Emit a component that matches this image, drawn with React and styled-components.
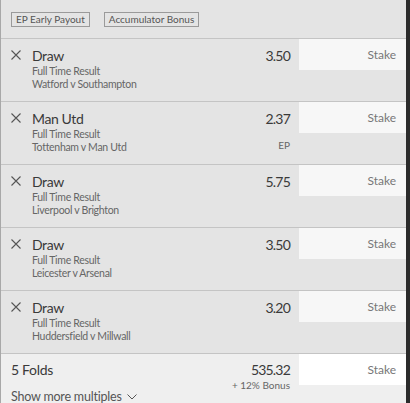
import React from 'react';
import styled, { createGlobalStyle } from 'styled-components';

const GlobalStyle = createGlobalStyle`
  html, body {
    margin: 0;
    padding: 0;
    background: #2b2b2b;
  }
  body {
    font-family: Lato, "Open Sans", sans-serif;
  }
`;

const selections = [
  { name: 'Draw', market: 'Full Time Result', fixture: 'Watford v Southampton', odds: '3.50' },
  { name: 'Man Utd', market: 'Full Time Result', fixture: 'Tottenham v Man Utd', odds: '2.37', ep: true },
  { name: 'Draw', market: 'Full Time Result', fixture: 'Liverpool v Brighton', odds: '5.75' },
  { name: 'Draw', market: 'Full Time Result', fixture: 'Leicester v Arsenal', odds: '3.50' },
  { name: 'Draw', market: 'Full Time Result', fixture: 'Huddersfield v Millwall', odds: '3.20' },
];

const Panel = styled.div`
  width: 405px;
  height: 403px;
  overflow: hidden;
  background: #e4e4e4;
  border-left: 1px solid #a8a8a8;
  color: #444;
`;

const Header = styled.div`
  height: 38px;
  display: flex;
  align-items: flex-start;
  gap: 14px;
  padding: 12px 0 0 10px;
  box-sizing: border-box;
`;

const Tag = styled.span`
  height: 15px;
  box-sizing: border-box;
  border: 1px solid #9a9a9a;
  padding: 0 4px;
  font-size: 10px;
  line-height: 13px;
  color: #555;
  white-space: nowrap;
`;

const Row = styled.div`
  display: flex;
  height: 62px;
  border-top: 1px solid #c4c4c4;
  background: ${p => (p.$footer ? '#efefef' : '#e4e4e4')};
`;

const Close = styled.div`
  width: 21px;
  padding: 11px 0 0 10px;
  svg { display: block; }
`;

const Info = styled.div`
  flex: 1;
  padding-top: 8px;
  min-width: 0;
`;

const Title = styled.div`
  font-size: 14px;
  line-height: 18px;
  letter-spacing: -0.4px;
  color: #3a3a3a;
`;

const Sub = styled.div`
  font-size: 10.5px;
  line-height: 13px;
  letter-spacing: -0.3px;
  color: #666;
`;

const OddsCol = styled.div`
  width: 90px;
  padding: ${p => (p.$footer ? 7 : 8)}px 9px 0 0;
  display: flex;
  flex-direction: column;
  align-items: flex-end;
`;

const Odds = styled.div`
  font-size: 14px;
  line-height: 18px;
  letter-spacing: -0.8px;
  color: #3a3a3a;
`;

const Note = styled.div`
  font-size: 10px;
  line-height: 12px;
  color: #666;
  margin-top: ${p => p.$gap || 0}px;
`;

const Stake = styled.div`
  width: 107px;
  height: 31px;
  box-sizing: border-box;
  background: ${p => (p.$bright ? '#ffffff' : '#f7f7f7')};
  padding-right: 10px;
  display: flex;
  align-items: center;
  justify-content: flex-end;
  font-size: 12px;
  color: #777;
`;

const FoldInfo = styled.div`
  flex: 1;
  padding: 7px 0 0 10px;
`;

const FoldTitle = styled.div`
  font-size: 14px;
  line-height: 18px;
  letter-spacing: -0.3px;
  color: #3a3a3a;
`;

const More = styled.div`
  margin-top: 10px;
  font-size: 12.5px;
  line-height: 15px;
  letter-spacing: -0.2px;
  color: #555;
  display: flex;
  align-items: center;
  gap: 5px;
  white-space: nowrap;
`;

const CloseIcon = () => (
  <svg width="10" height="10" viewBox="0 0 10 10">
    <path d="M0.5 0.5 L9.5 9.5 M9.5 0.5 L0.5 9.5" stroke="#555" strokeWidth="1.1" fill="none" />
  </svg>
);

const Chevron = () => (
  <svg width="10" height="6" viewBox="0 0 10 6">
    <path d="M0.5 0.5 L5 5 L9.5 0.5" stroke="#555" strokeWidth="1" fill="none" />
  </svg>
);

export default function App() {
  return (
    <>
      <GlobalStyle />
      <Panel>
        <Header>
          <Tag>EP Early Payout</Tag>
          <Tag>Accumulator Bonus</Tag>
        </Header>
        {selections.map((s, i) => (
          <Row key={i}>
            <Close><CloseIcon /></Close>
            <Info>
              <Title>{s.name}</Title>
              <Sub>{s.market}</Sub>
              <Sub>{s.fixture}</Sub>
            </Info>
            <OddsCol>
              <Odds>{s.odds}</Odds>
              {s.ep && <Note $gap={11}>EP</Note>}
            </OddsCol>
            <Stake>Stake</Stake>
          </Row>
        ))}
        <Row $footer>
          <FoldInfo>
            <FoldTitle>5 Folds</FoldTitle>
            <More>Show more multiples <Chevron /></More>
          </FoldInfo>
          <OddsCol $footer>
            <Odds>535.32</Odds>
            <Note>+ 12% Bonus</Note>
          </OddsCol>
          <Stake $bright>Stake</Stake>
        </Row>
      </Panel>
    </>
  );
}
